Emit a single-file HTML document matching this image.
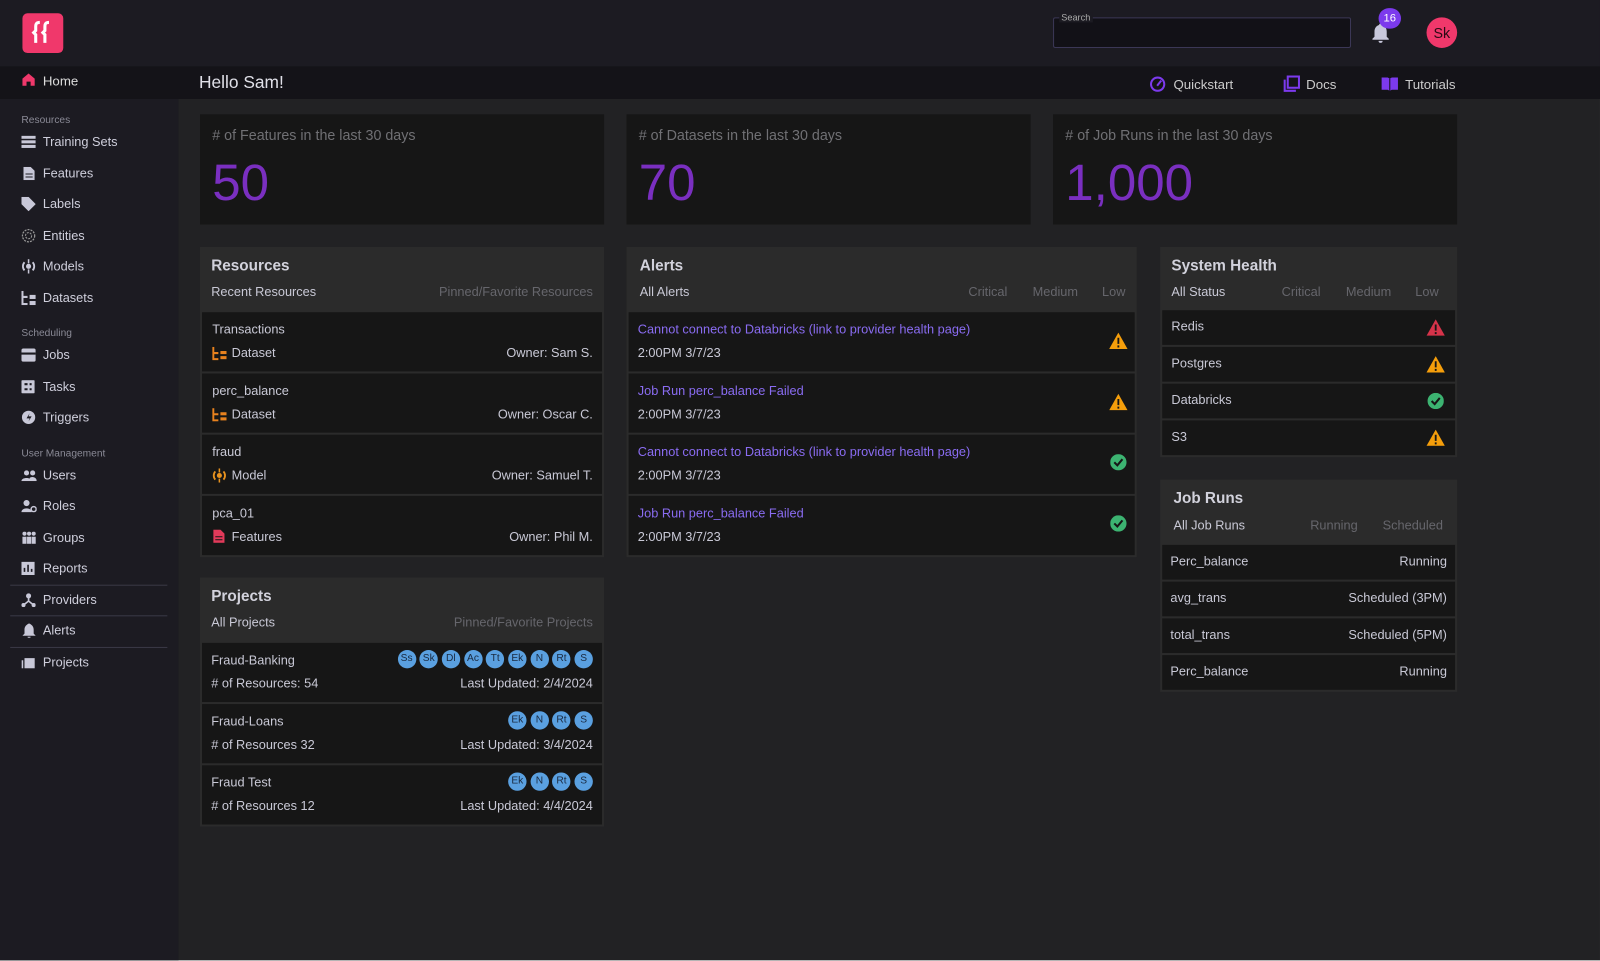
<!DOCTYPE html>
<html><head><meta charset="utf-8"><style>
*{box-sizing:border-box;margin:0;padding:0}
html,body{width:1600px;height:961px;overflow:hidden;background:#d8d8d8}
#s{position:absolute;left:0;top:0;width:1568px;height:941px;transform:scale(1.0204);transform-origin:0 0;background:#222224;font-family:"Liberation Sans",sans-serif;color:#c9c9d6;overflow:hidden}
.a{position:absolute}
.top{left:0;top:0;width:1568px;height:65px;background:#1c1b22}
.sub{left:0;top:65px;width:1568px;height:32px;background:#141318}
.side{left:0;top:97px;width:175px;height:850px;background:#1c1b22}
.si{position:absolute;left:42px;font-size:12.5px;color:#cfcfdc;transform:translateY(-50%)}
.ic{position:absolute;left:21px;transform:translateY(-50%)}
.sl{position:absolute;left:21px;font-size:10px;color:#8a8a96;transform:translateY(-50%)}
.ln{position:absolute;left:10px;width:154px;height:1px;background:#3a3946}
.card{background:#161616;height:108px}
.card .l{position:absolute;left:12px;top:12px;font-size:14px;color:#707074}
.card .n{position:absolute;left:12px;top:38px;font-size:50px;color:#7a2fc0}
.pan{background:#2b2b2b;padding:0 2px 2px}
.hd{position:relative;height:64px}
.hd .t{position:absolute;left:9px;top:10px;font-size:15px;font-weight:bold;color:#d2d2dc}
.hd .s{position:absolute;left:9px;top:37px;font-size:12.5px;color:#c9c9d6}
.hd .r{position:absolute;top:37px;font-size:12.5px;color:#66666c}
.row{position:relative;background:#161616;margin-bottom:2px;font-size:12.5px;color:#c9c9d6}
.row .x{position:absolute}
.av{display:inline-block;width:18px;height:18px;border-radius:50%;background:#5aa0e0;color:#1a2a40;font-size:10px;text-align:center;line-height:18px;margin-left:3.7px}
.lk{color:#8a6cf2}
</style></head><body><div id="s">
<div class="a top"></div>
<div class="a" style="left:22px;top:13px;width:40px;height:39px;background:#f0386b;border-radius:5px"></div>
<svg class="a" style="left:22px;top:13px" width="40" height="39" viewBox="0 0 40 39"><path d="M17 9c-3 0-4 1-4 4v4l-2 2 2 2v8M26 9c-3 0-4 1-4 4v4l-2 2 2 2v8" stroke="#fff" stroke-width="3" fill="none"/></svg>
<div class="a" style="left:1032px;top:17px;width:292px;height:30px;border:1.5px solid #3b3756;border-radius:2px;background:#121117"></div>
<div class="a" style="left:1038px;top:12px;font-size:9px;color:#aaa;background:#1c1b22;padding:0 2px">Search</div>
<svg class="a" style="left:1344px;top:22px" width="18" height="22" viewBox="0 0 18 22"><path d="M9 1c-1 0-1.5.7-1.5 1.5C4.5 3.3 3 6 3 9v5l-2 2v1h16v-1l-2-2V9c0-3-1.5-5.7-4.5-6.5C10.5 1.7 10 1 9 1zM7 18a2 2 0 004 0z" fill="#c8c8dc"/></svg>
<div class="a" style="left:1351px;top:8px;width:22px;height:20px;border-radius:10px;background:#7c3aed;color:#fff;font-size:11px;text-align:center;line-height:20px">16</div>
<div class="a" style="left:1398px;top:17px;width:30px;height:30px;border-radius:50%;background:#f0386b;color:#2a0a14;font-size:14px;text-align:center;line-height:30px">Sk</div>
<div class="a sub"></div>
<svg class="a" style="left:21px;top:71px" width="14" height="14" viewBox="0 0 14 14"><path d="M7 1L1 6v7h4V9h4v4h4V6z" fill="#f0386b"/></svg>
<div class="a" style="left:42px;top:72px;font-size:13px;color:#ddd">Home</div>
<div class="a" style="left:195px;top:71px;font-size:17px;color:#e0e0e8">Hello Sam!</div>
<svg class="a" style="left:1126px;top:74px" width="17" height="16" viewBox="0 0 17 16"><circle cx="8.5" cy="8.5" r="6.5" fill="none" stroke="#7c3aed" stroke-width="2"/><path d="M8 10l4-5" stroke="#7c3aed" stroke-width="2"/></svg>
<div class="a" style="left:1150px;top:75px;font-size:13px;color:#ccc">Quickstart</div>
<svg class="a" style="left:1257px;top:74px" width="17" height="17" viewBox="0 0 17 17"><rect x="5" y="1" width="11" height="11" fill="none" stroke="#7c3aed" stroke-width="2"/><path d="M2 4v11h11" fill="none" stroke="#7c3aed" stroke-width="2"/></svg>
<div class="a" style="left:1280px;top:75px;font-size:13px;color:#ccc">Docs</div>
<svg class="a" style="left:1353px;top:75px" width="18" height="14" viewBox="0 0 18 14"><path d="M1 1h6l2 1 2-1h6v12h-6l-2 1-2-1H1z" fill="#7c3aed"/><path d="M9 2v12" stroke="#141318"/></svg>
<div class="a" style="left:1377px;top:75px;font-size:13px;color:#ccc">Tutorials</div>
<div class="a side"></div>
<div class="sl" style="top:118px">Resources</div>
<div class="sl" style="top:327px">Scheduling</div>
<div class="sl" style="top:445px">User Management</div>
<svg class="ic" style="top:139px" width="14" height="12"><rect y="0" width="14" height="3" fill="#c8c8d8"/><rect y="4.5" width="14" height="3" fill="#c8c8d8"/><rect y="9" width="14" height="3" fill="#c8c8d8"/></svg>
<div class="si" style="top:139px">Training Sets</div>
<svg class="ic" style="top:170px;left:23px" width="11" height="13"><path d="M0 0h7l4 4v9H0z" fill="#c8c8d8"/><path d="M2 7h7M2 10h7" stroke="#1c1b22"/></svg>
<div class="si" style="top:170px">Features</div>
<svg class="ic" style="top:200px" width="14" height="14"><path d="M0 0h7l7 7-7 7-7-7z" fill="#c8c8d8"/></svg>
<div class="si" style="top:200px">Labels</div>
<svg class="ic" style="top:231px" width="14" height="14"><circle cx="7" cy="7" r="6" fill="none" stroke="#999" stroke-width="1.2" stroke-dasharray="2 1"/><circle cx="7" cy="7" r="3" fill="none" stroke="#999" stroke-dasharray="2 1"/></svg>
<div class="si" style="top:231px">Entities</div>
<svg class="ic" style="top:261px" width="14" height="14"><path d="M3 3a6 6 0 000 8M11 3a6 6 0 010 8" stroke="#c8c8d8" stroke-width="1.8" fill="none"/><circle cx="7" cy="7" r="2.5" fill="#c8c8d8"/><path d="M7 0v4M7 10v4" stroke="#c8c8d8" stroke-width="1.5"/></svg>
<div class="si" style="top:261px">Models</div>
<svg class="ic" style="top:292px" width="14" height="14"><path d="M1 0v13h5M1 6h5" stroke="#c8c8d8" stroke-width="2" fill="none"/><rect x="8" y="4" width="6" height="4" fill="#c8c8d8"/><rect x="8" y="10" width="6" height="4" fill="#c8c8d8"/></svg>
<div class="si" style="top:292px">Datasets</div>
<svg class="ic" style="top:348px" width="14" height="13"><rect width="14" height="13" rx="2" fill="#c8c8d8"/><path d="M0 5h14" stroke="#1c1b22" stroke-width="2"/></svg>
<div class="si" style="top:348px">Jobs</div>
<svg class="ic" style="top:379px" width="13" height="13"><rect width="13" height="13" rx="1" fill="#c8c8d8"/><path d="M3 4h3M3 9h3M8 4h2M8 9h2" stroke="#1c1b22" stroke-width="2"/></svg>
<div class="si" style="top:379px">Tasks</div>
<svg class="ic" style="top:409px" width="14" height="14"><circle cx="7" cy="7" r="6.5" fill="#c8c8d8"/><path d="M8 3L5 8h3l-1 3 3-5H7z" fill="#1c1b22"/></svg>
<div class="si" style="top:409px">Triggers</div>
<svg class="ic" style="top:466px" width="15" height="11"><circle cx="5" cy="3" r="2.5" fill="#c8c8d8"/><circle cx="11" cy="3" r="2.5" fill="#c8c8d8"/><path d="M0 11c0-4 10-4 10 0zM8 8c2-2 7-1 7 3h-5z" fill="#c8c8d8"/></svg>
<div class="si" style="top:466px">Users</div>
<svg class="ic" style="top:496px" width="15" height="12"><circle cx="5" cy="3" r="3" fill="#c8c8d8"/><path d="M0 12c0-5 10-5 10 0z" fill="#c8c8d8"/><circle cx="12" cy="9" r="2.5" fill="none" stroke="#c8c8d8" stroke-width="1.5"/></svg>
<div class="si" style="top:496px">Roles</div>
<svg class="ic" style="top:527px" width="15" height="12"><circle cx="3" cy="2" r="2" fill="#c8c8d8"/><circle cx="7.5" cy="2" r="2" fill="#c8c8d8"/><circle cx="12" cy="2" r="2" fill="#c8c8d8"/><rect x="1" y="5" width="4" height="7" fill="#c8c8d8"/><rect x="5.5" y="5" width="4" height="7" fill="#c8c8d8"/><rect x="10" y="5" width="4" height="7" fill="#c8c8d8"/></svg>
<div class="si" style="top:527px">Groups</div>
<svg class="ic" style="top:557px" width="13" height="13"><rect width="13" height="13" fill="#c8c8d8"/><path d="M3 10V6M6.5 10V3M10 10V7" stroke="#1c1b22" stroke-width="1.6"/></svg>
<div class="si" style="top:557px">Reports</div>
<div class="ln" style="top:573px"></div>
<svg class="ic" style="top:588px" width="14" height="14"><circle cx="7" cy="3" r="2.5" fill="#c8c8d8"/><circle cx="2" cy="12" r="2" fill="#c8c8d8"/><circle cx="12" cy="12" r="2" fill="#c8c8d8"/><path d="M7 3v5L2 12M7 8l5 4" stroke="#c8c8d8" stroke-width="1.6" fill="none"/></svg>
<div class="si" style="top:588px">Providers</div>
<div class="ln" style="top:603px"></div>
<svg class="ic" style="top:618px;left:22px" width="13" height="14"><path d="M6.5 0C4 1 2 3 2 6v4l-2 2h13l-2-2V6c0-3-2-5-4.5-6zM5 13h3a1.5 1.5 0 01-3 0z" fill="#c8c8d8"/></svg>
<div class="si" style="top:618px">Alerts</div>
<div class="ln" style="top:634px"></div>
<svg class="ic" style="top:649px" width="14" height="12"><path d="M3 2h10v10H3z" fill="#c8c8d8"/><path d="M1 4v8" stroke="#c8c8d8" stroke-width="1.5"/></svg>
<div class="si" style="top:649px">Projects</div>

<div class="a card" style="left:196px;top:112px;width:396px"><div class="l"># of Features in the last 30 days</div><div class="n">50</div></div>
<div class="a card" style="left:614px;top:112px;width:396px"><div class="l"># of Datasets in the last 30 days</div><div class="n">70</div></div>
<div class="a card" style="left:1032px;top:112px;width:396px"><div class="l"># of Job Runs in the last 30 days</div><div class="n">1,000</div></div>

<div class="a pan" style="left:196px;top:242px;width:396px">
<div class="hd"><div class="t">Resources</div><div class="s">Recent Resources</div><div class="r" style="right:9px">Pinned/Favorite Resources</div></div>
<div class="row" style="height:58px"><div class="x" style="left:10px;top:10px">Transactions</div><svg class="x" style="left:10px;top:34px" width="14" height="13"><path d="M1 0v12h5M1 6h5" stroke="#e8821e" stroke-width="2" fill="none"/><rect x="8" y="4" width="6" height="3" fill="#e8821e"/><rect x="8" y="9" width="6" height="3" fill="#e8821e"/></svg><div class="x" style="left:29px;top:33px">Dataset</div><div class="x" style="right:9px;top:33px">Owner: Sam S.</div></div>
<div class="row" style="height:58px"><div class="x" style="left:10px;top:10px">perc_balance</div><svg class="x" style="left:10px;top:34px" width="14" height="13"><path d="M1 0v12h5M1 6h5" stroke="#e8821e" stroke-width="2" fill="none"/><rect x="8" y="4" width="6" height="3" fill="#e8821e"/><rect x="8" y="9" width="6" height="3" fill="#e8821e"/></svg><div class="x" style="left:29px;top:33px">Dataset</div><div class="x" style="right:9px;top:33px">Owner: Oscar C.</div></div>
<div class="row" style="height:58px"><div class="x" style="left:10px;top:10px">fraud</div><svg class="x" style="left:10px;top:33px" width="14" height="14"><path d="M3 3a6 6 0 000 8M11 3a6 6 0 010 8" stroke="#e8921e" stroke-width="1.8" fill="none"/><circle cx="7" cy="7" r="2.5" fill="#e8921e"/><path d="M7 0v4M7 10v4" stroke="#e8921e" stroke-width="1.5"/></svg><div class="x" style="left:29px;top:33px">Model</div><div class="x" style="right:9px;top:33px">Owner: Samuel T.</div></div>
<div class="row" style="height:58px;margin-bottom:0"><div class="x" style="left:10px;top:10px">pca_01</div><svg class="x" style="left:11px;top:33px" width="11" height="13"><path d="M0 0h7l4 4v9H0z" fill="#e23a5a"/><path d="M2 7h7M2 10h7" stroke="#161616"/></svg><div class="x" style="left:29px;top:33px">Features</div><div class="x" style="right:9px;top:33px">Owner: Phil M.</div></div>
</div>

<div class="a pan" style="left:196px;top:566px;width:396px">
<div class="hd"><div class="t">Projects</div><div class="s">All Projects</div><div class="r" style="right:9px">Pinned/Favorite Projects</div></div>
<div class="row" style="height:58px"><div class="x" style="left:9px;top:10px">Fraud-Banking</div><div class="x" style="right:9px;top:7px"><span class="av">Ss</span><span class="av">Sk</span><span class="av">Dl</span><span class="av">Ac</span><span class="av">Tt</span><span class="av">Ek</span><span class="av">N</span><span class="av">Rt</span><span class="av">S</span></div><div class="x" style="left:9px;top:33px"># of Resources: 54</div><div class="x" style="right:9px;top:33px">Last Updated: 2/4/2024</div></div>
<div class="row" style="height:58px"><div class="x" style="left:9px;top:10px">Fraud-Loans</div><div class="x" style="right:9px;top:7px"><span class="av">Ek</span><span class="av">N</span><span class="av">Rt</span><span class="av">S</span></div><div class="x" style="left:9px;top:33px"># of Resources 32</div><div class="x" style="right:9px;top:33px">Last Updated: 3/4/2024</div></div>
<div class="row" style="height:58px;margin-bottom:0"><div class="x" style="left:9px;top:10px">Fraud Test</div><div class="x" style="right:9px;top:7px"><span class="av">Ek</span><span class="av">N</span><span class="av">Rt</span><span class="av">S</span></div><div class="x" style="left:9px;top:33px"># of Resources 12</div><div class="x" style="right:9px;top:33px">Last Updated: 4/4/2024</div></div>
</div>

<div class="a pan" style="left:614px;top:242px;width:500px">
<div class="hd"><div class="t" style="left:11px">Alerts</div><div class="s" style="left:11px">All Alerts</div><div class="r" style="left:333px">Critical</div><div class="r" style="left:396px">Medium</div><div class="r" style="left:464px">Low</div></div>
<div class="row" style="height:58px"><div class="x lk" style="left:9px;top:10px">Cannot connect to Databricks (link to provider health page)</div><div class="x" style="left:9px;top:33px">2:00PM 3/7/23</div><svg class="x" style="left:471px;top:20px" width="18" height="16"><path d="M9 0l9 16H0z" fill="#f59e0b"/><path d="M9 5v6M9 12.5v2" stroke="#161616" stroke-width="1.8"/></svg></div>
<div class="row" style="height:58px"><div class="x lk" style="left:9px;top:10px">Job Run perc_balance Failed</div><div class="x" style="left:9px;top:33px">2:00PM 3/7/23</div><svg class="x" style="left:471px;top:20px" width="18" height="16"><path d="M9 0l9 16H0z" fill="#f59e0b"/><path d="M9 5v6M9 12.5v2" stroke="#161616" stroke-width="1.8"/></svg></div>
<div class="row" style="height:58px"><div class="x lk" style="left:9px;top:10px">Cannot connect to Databricks (link to provider health page)</div><div class="x" style="left:9px;top:33px">2:00PM 3/7/23</div><svg class="x" style="left:472px;top:19px" width="16" height="16"><circle cx="8" cy="8" r="8" fill="#3cb371"/><path d="M4 8l3 3 5-6" stroke="#161616" stroke-width="2" fill="none"/></svg></div>
<div class="row" style="height:58px;margin-bottom:0"><div class="x lk" style="left:9px;top:10px">Job Run perc_balance Failed</div><div class="x" style="left:9px;top:33px">2:00PM 3/7/23</div><svg class="x" style="left:472px;top:19px" width="16" height="16"><circle cx="8" cy="8" r="8" fill="#3cb371"/><path d="M4 8l3 3 5-6" stroke="#161616" stroke-width="2" fill="none"/></svg></div>
</div>

<div class="a pan" style="left:1137px;top:242px;width:291px">
<div class="hd" style="height:62px"><div class="t">System Health</div><div class="s">All Status</div><div class="r" style="left:117px">Critical</div><div class="r" style="left:180px">Medium</div><div class="r" style="left:248px">Low</div></div>
<div class="row" style="height:34px"><div class="x" style="left:9px;top:9px">Redis</div><svg class="x" style="left:259px;top:9px" width="18" height="16"><path d="M9 0l9 16H0z" fill="#d6334a"/><path d="M9 5v6M9 12.5v2" stroke="#161616" stroke-width="1.8"/></svg></div>
<div class="row" style="height:34px"><div class="x" style="left:9px;top:9px">Postgres</div><svg class="x" style="left:259px;top:9px" width="18" height="16"><path d="M9 0l9 16H0z" fill="#f59e0b"/><path d="M9 5v6M9 12.5v2" stroke="#161616" stroke-width="1.8"/></svg></div>
<div class="row" style="height:34px"><div class="x" style="left:9px;top:9px">Databricks</div><svg class="x" style="left:260px;top:9px" width="16" height="16"><circle cx="8" cy="8" r="8" fill="#3cb371"/><path d="M4 8l3 3 5-6" stroke="#161616" stroke-width="2" fill="none"/></svg></div>
<div class="row" style="height:34px;margin-bottom:0"><div class="x" style="left:9px;top:9px">S3</div><svg class="x" style="left:259px;top:9px" width="18" height="16"><path d="M9 0l9 16H0z" fill="#f59e0b"/><path d="M9 5v6M9 12.5v2" stroke="#161616" stroke-width="1.8"/></svg></div>
</div>

<div class="a pan" style="left:1137px;top:470px;width:291px">
<div class="hd"><div class="t" style="left:11px">Job Runs</div><div class="s" style="left:11px;top:38px">All Job Runs</div><div class="r" style="left:145px;top:38px">Running</div><div class="r" style="left:216px;top:38px">Scheduled</div></div>
<div class="row" style="height:34px"><div class="x" style="left:8px;top:9px">Perc_balance</div><div class="x" style="right:8px;top:9px">Running</div></div>
<div class="row" style="height:34px"><div class="x" style="left:8px;top:9px">avg_trans</div><div class="x" style="right:8px;top:9px">Scheduled (3PM)</div></div>
<div class="row" style="height:34px"><div class="x" style="left:8px;top:9px">total_trans</div><div class="x" style="right:8px;top:9px">Scheduled (5PM)</div></div>
<div class="row" style="height:34px;margin-bottom:0"><div class="x" style="left:8px;top:9px">Perc_balance</div><div class="x" style="right:8px;top:9px">Running</div></div>
</div>
</div></body></html>
